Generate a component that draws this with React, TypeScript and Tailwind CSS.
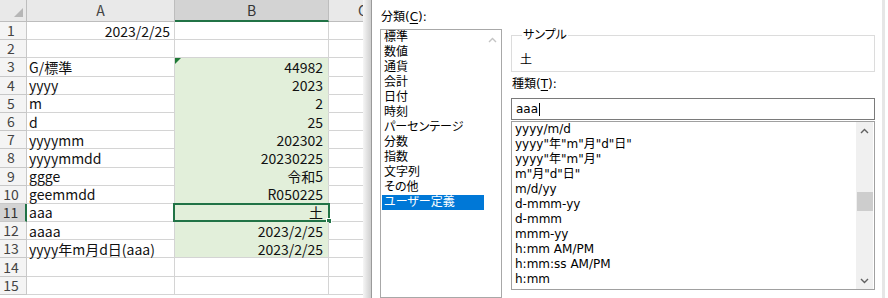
import React from 'react';

const rows: [string, string][] = [
  ['2023/2/25', ''],
  ['', ''],
  ['G/標準', '44982'],
  ['yyyy', '2023'],
  ['m', '2'],
  ['d', '25'],
  ['yyyymm', '202302'],
  ['yyyymmdd', '20230225'],
  ['ggge', '令和5'],
  ['geemmdd', 'R050225'],
  ['aaa', '土'],
  ['aaaa', '2023/2/25'],
  ['yyyy年m月d日(aaa)', '2023/2/25'],
  ['', ''],
  ['', ''],
];

const categories = [
  '標準',
  '数値',
  '通貨',
  '会計',
  '日付',
  '時刻',
  'パーセンテージ',
  '分数',
  '指数',
  '文字列',
  'その他',
  'ユーザー定義',
];

const formats = [
  'yyyy/m/d',
  'yyyy"年"m"月"d"日"',
  'yyyy"年"m"月"',
  'm"月"d"日"',
  'm/d/yy',
  'd-mmm-yy',
  'd-mmm',
  'mmm-yy',
  'h:mm AM/PM',
  'h:mm:ss AM/PM',
  'h:mm',
];

function ChevronUp({ color }: { color: string }) {
  return (
    <svg width="9" height="6" viewBox="0 0 9 6">
      <path d="M1 5 L4.5 1.5 L8 5" fill="none" stroke={color} strokeWidth="1.4" />
    </svg>
  );
}

function ChevronDown({ color }: { color: string }) {
  return (
    <svg width="9" height="6" viewBox="0 0 9 6">
      <path d="M1 1 L4.5 4.5 L8 1" fill="none" stroke={color} strokeWidth="1.4" />
    </svg>
  );
}

function Sheet() {
  return (
    <div className="w-[363px] h-full overflow-hidden shrink-0 font-['Noto_Sans_CJK_JP',sans-serif] text-[14px] text-[#111]">
      <div className="grid grid-cols-[27px_148px_154px_70px] grid-rows-[22px_repeat(15,18.2px)] w-[399px]">
        <div className="relative bg-[#e9e9e9] border-r border-b border-[#bdbdbd]">
          <svg className="absolute right-[3px] bottom-[4px]" width="9" height="9" viewBox="0 0 9 9">
            <path d="M9 0 L9 9 L0 9 Z" fill="#b6b6b6" />
          </svg>
        </div>
        <div className="flex items-center justify-center bg-[#e9e9e9] border-r border-b border-[#bdbdbd] text-[#444]">A</div>
        <div className="flex items-center justify-center bg-[#d3d3d3] border-r border-[#bdbdbd] border-b-2 border-b-[#217346] text-[#333]">B</div>
        <div className="flex items-center justify-start pl-[29px] bg-[#e9e9e9] border-r border-b border-[#bdbdbd] text-[#444]">C</div>

        {rows.map(([a, b], i) => {
          const n = i + 1;
          const filled = n >= 3 && n <= 13;
          const active = n === 11;
          return (
            <React.Fragment key={n}>
              <div
                className={
                  active
                    ? 'flex items-center justify-center pr-[4px] bg-[#d3d3d3] border-b border-[#c8c8c8] border-r-2 border-r-[#217346] text-[#333]'
                    : 'flex items-center justify-center pr-[4px] bg-[#f4f4f4] border-r border-b border-[#c8c8c8] text-[#444]'
                }
              >
                {n}
              </div>
              <div
                className={
                  n === 1
                    ? 'flex items-center justify-end pr-[4px] pt-[1px] border-r border-b border-[#d4d4d4] whitespace-nowrap'
                    : 'flex items-center justify-start pl-[2px] pt-[1px] border-r border-b border-[#d4d4d4] whitespace-nowrap'
                }
              >
                {a}
              </div>
              <div
                className={
                  filled
                    ? n === 13
                      ? 'relative flex items-center justify-end pr-[5px] pt-[1px] bg-[#e2efda] border-r border-b border-[#d4d4d4] whitespace-nowrap'
                      : 'relative flex items-center justify-end pr-[5px] pt-[1px] bg-[#e2efda] border-r border-[#d4d4d4] border-b border-b-[#e2efda] whitespace-nowrap'
                    : 'relative flex items-center justify-end pr-[5px] pt-[1px] border-r border-b border-[#d4d4d4] whitespace-nowrap'
                }
              >
                {n === 3 && (
                  <svg className="absolute left-0 top-0" width="6" height="6" viewBox="0 0 6 6">
                    <path d="M0 0 L6 0 L0 6 Z" fill="#1e7a36" />
                  </svg>
                )}
                {active && (
                  <>
                    <div className="absolute left-[-2px] top-[-1px] right-[-2px] bottom-[-1px] border-2 border-[#217346]" />
                    <div className="absolute right-[-4px] bottom-[-3px] w-[6px] h-[6px] bg-[#217346] border border-white" />
                  </>
                )}
                {b}
              </div>
              <div className="border-r border-b border-[#d4d4d4]" />
            </React.Fragment>
          );
        })}
      </div>
    </div>
  );
}

function Dialog() {
  return (
    <div className="flex-1 h-full bg-white border-l border-[#9a9a9a] flex font-['DejaVu_Sans','Noto_Sans_CJK_JP',sans-serif] text-[12px] leading-[15px] text-black [font-feature-settings:'palt']">
      <div className="flex pl-[8px]">
        <div className="w-[122px] pt-[10px] flex flex-col">
          <div className="pl-[1px] h-[15px]">
            分類(<span className="underline underline-offset-2">C</span>):
          </div>
          <div className="mt-[4px] h-[290px] border border-[#a8a8a8] flex">
            <div className="w-[102px] ml-[1px] flex flex-col">
              {categories.map((c) => (
                <div
                  key={c}
                  className={
                    c === 'ユーザー定義'
                      ? 'h-[15px] pl-[2px] bg-[#0078d7] text-white whitespace-nowrap'
                      : 'h-[15px] pl-[2px] whitespace-nowrap'
                  }
                >
                  {c}
                </div>
              ))}
            </div>
            <div className="flex-1 flex justify-center pt-[7px]">
              <ChevronUp color="#c4c4c4" />
            </div>
          </div>
        </div>

        <div className="ml-[9px] w-[364px] pt-[27px] flex flex-col">
          <fieldset className="w-[364px] border border-[#dcdcdc] pl-[8px] pb-[3px]">
            <legend className="ml-[2px] px-[1px] leading-[16px]">サンプル</legend>
            <div className="mt-[10px] h-[15px]">土</div>
          </fieldset>
          <div className="mt-[5px] h-[15px] pl-[1px]">
            種類(<span className="underline underline-offset-2">T</span>):
          </div>
          <div className="mt-[6px] h-[22px] border border-[#7a7a7a] flex items-center pl-[4px]">
            <span>aaa</span>
            <span className="inline-block w-[1px] h-[13px] bg-black ml-[1px]" />
          </div>
          <div className="mt-[1px] h-[169px] border border-[#a0a0a0] flex">
            <div className="flex-1 flex flex-col pl-[3px]">
              {formats.map((f) => (
                <div key={f} className="h-[15px] whitespace-nowrap">
                  {f}
                </div>
              ))}
            </div>
            <div className="w-[17px] mr-[1px] bg-[#f0f0f0] flex flex-col">
              <div className="h-[17px] flex items-center justify-center">
                <ChevronUp color="#606060" />
              </div>
              <div className="flex-1">
                <div className="mt-[53px] h-[19px] ml-[1px] bg-[#cdcdcd]" />
              </div>
              <div className="h-[17px] flex items-center justify-center">
                <ChevronDown color="#606060" />
              </div>
            </div>
          </div>
        </div>
      </div>
      <div className="flex-1" />
      <div className="w-[3px] h-full bg-[#e6e6e6] mr-[3px]" />
    </div>
  );
}

export default function App() {
  return (
    <div className="w-[888px] h-[298px] overflow-hidden flex bg-white">
      <Sheet />
      <div className="w-[8px] h-full shrink-0 bg-gradient-to-r from-[#f6f6f6] to-[#cfcfcf]" />
      <Dialog />
    </div>
  );
}
